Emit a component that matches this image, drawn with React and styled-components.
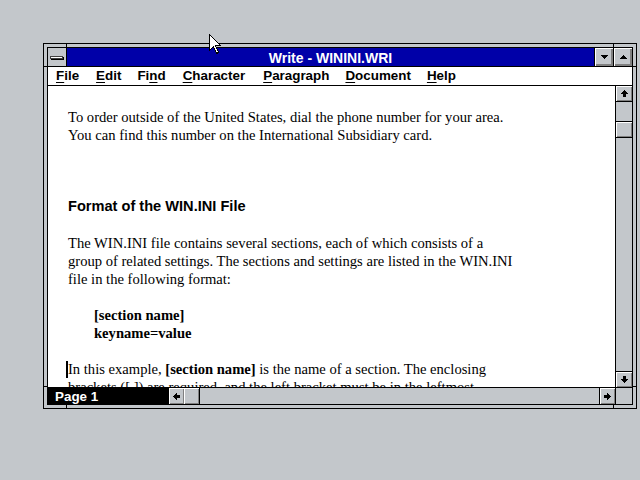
import React from "react";
import styled, { createGlobalStyle } from "styled-components";

const GlobalStyle = createGlobalStyle`
  html, body { margin: 0; padding: 0; background: #c3c7cb; }
  body { width: 640px; height: 480px; overflow: hidden; }
`;

const Desktop = styled.div`
  position: relative;
  width: 640px;
  height: 480px;
  padding: 43px 0 0 43px;
  box-sizing: border-box;
  background: #c3c7cb;
`;

const Window = styled.div`
  position: relative;
  width: 594px;
  height: 366px;
  box-sizing: border-box;
  border: 1px solid #000;
  padding: 3px;
  background: #c3c7cb;
`;

const Notch = styled.span`
  position: absolute;
  background: #000;
  ${(p) =>
    p.$v
      ? `width: 1px; height: 3px; left: ${p.$x}px; ${p.$bottom ? "bottom: 0;" : "top: 0;"}`
      : `height: 1px; width: 3px; top: ${p.$y}px; ${p.$right ? "right: 0;" : "left: 0;"}`}
`;

const Inner = styled.div`
  height: 100%;
  box-sizing: border-box;
  border: 1px solid #000;
  display: flex;
  flex-direction: column;
  background: #fff;
`;

const TitleBar = styled.div`
  display: flex;
  height: 18px;
  border-bottom: 1px solid #000;
  flex: none;
`;

const SysBox = styled.div`
  width: 18px;
  border-right: 1px solid #000;
  background: #c3c7cb;
  display: flex;
  align-items: center;
  justify-content: center;
`;

const SysBar = styled.div`
  width: 11px;
  height: 1px;
  background: #fff;
  border: 1px solid #404040;
  box-shadow: 1px 1px 0 #000;
  margin-left: -1px;
`;

const Caption = styled.div`
  flex: 1;
  background: #0000a8;
  color: #fff;
  font-family: "Liberation Sans", Arial, sans-serif;
  font-weight: bold;
  font-size: 14px;
  display: flex;
  align-items: center;
  justify-content: center;
  padding-top: 1px;
`;

const CapButton = styled.div`
  width: 18px;
  border-left: 1px solid #000;
  background: #c3c7cb;
  box-shadow: inset 1px 1px 0 #fff, inset -1px -1px 0 #808080, inset -2px -2px 0 #808080;
  display: flex;
  align-items: center;
  justify-content: center;
`;

const MenuBar = styled.div`
  display: flex;
  height: 19px;
  box-sizing: border-box;
  padding-bottom: 1px;
  border-bottom: 1px solid #000;
  align-items: center;
  font-family: "Liberation Sans", Arial, sans-serif;
  font-weight: bold;
  font-size: 13.4px;
  color: #000;
  flex: none;
`;

const MenuItem = styled.span`
  padding: 0 ${(p) => p.$pad ?? 8}px;
  margin-left: ${(p) => p.$shift ?? 0}px;
  u { text-decoration: underline; text-underline-offset: 2px; }
`;

const Body = styled.div`
  flex: 1;
  display: flex;
  min-height: 0;
`;

const Doc = styled.div`
  flex: 1;
  overflow: hidden;
  background: #fff;
  padding: 22px 0 0 20px;
  font-family: "Liberation Serif", "Times New Roman", serif;
  font-size: 14.6px;
  line-height: 18px;
  color: #000;
  white-space: nowrap;
`;

const Para = styled.div`
  margin-bottom: ${(p) => (p.$gap ?? 1) * 18}px;
  padding-left: ${(p) => p.$indent ?? 0}px;
  font-weight: ${(p) => (p.$bold ? "bold" : "normal")};
`;

const Line = styled.div`
  height: 18px;
`;

const Heading = styled.div`
  font-family: "Liberation Sans", Arial, sans-serif;
  font-weight: bold;
  font-size: 14.6px;
  height: 18px;
  margin-top: -1px;
  margin-bottom: 19px;
`;

const Caret = styled.span`
  display: inline-block;
  width: 2px;
  height: 17px;
  background: #000;
  vertical-align: -4px;
  margin-left: -2px;
`;

const VScroll = styled.div`
  width: 16px;
  flex: none;
  border-left: 1px solid #000;
  background: #c3c7cb;
  display: flex;
  flex-direction: column;
`;

const ScrollButton = styled.div`
  width: 16px;
  height: 16px;
  flex: none;
  box-sizing: border-box;
  background: #c3c7cb;
  box-shadow: inset 1px 1px 0 #fff, inset -1px -1px 0 #808080;
  display: flex;
  align-items: center;
  justify-content: center;
  ${(p) => p.$edge === "bottom" && "border-bottom: 1px solid #000;"}
  ${(p) => p.$edge === "top" && "border-top: 1px solid #000;"}
  ${(p) => p.$edge === "left" && "border-left: 1px solid #000; height: 100%;"}
`;

const Track = styled.div`
  flex: 1;
  display: flex;
  flex-direction: ${(p) => (p.$horizontal ? "row" : "column")};
`;

const VThumb = styled.div`
  margin-top: 19px;
  height: 17px;
  box-sizing: border-box;
  border-top: 1px solid #000;
  border-bottom: 1px solid #000;
  background: #c3c7cb;
  box-shadow: inset 1px 1px 0 #fff, inset -1px -1px 0 #808080;
`;

const HThumb = styled.div`
  width: 16px;
  height: 100%;
  box-sizing: border-box;
  border-right: 1px solid #000;
  background: #c3c7cb;
  box-shadow: inset 1px 1px 0 #fff, inset -1px -1px 0 #808080;
`;

const BottomRow = styled.div`
  display: flex;
  height: 16px;
  flex: none;
  border-top: 1px solid #000;
  background: #c3c7cb;
`;

const PageBox = styled.div`
  width: 120px;
  background: #000;
  color: #fff;
  font-family: "Liberation Sans", Arial, sans-serif;
  font-weight: bold;
  font-size: 13.4px;
  display: flex;
  align-items: center;
  padding-left: 7px;
  box-sizing: border-box;
`;

const HScroll = styled.div`
  flex: 1;
  display: flex;
`;

const Corner = styled.div`
  width: 16px;
  border-left: 1px solid #000;
  background: #c3c7cb;
`;

const Pointer = styled.svg`
  position: absolute;
  left: 209px;
  top: 34px;
`;

const rot = { up: 0, right: 90, down: 180, left: 270 };

const ScrollArrow = ({ dir }) => (
  <svg width="7" height="7" viewBox="0 0 7 7" shapeRendering="crispEdges"
       style={{ transform: `rotate(${rot[dir]}deg)` }}>
    <path d="M3 0h1v1h1v1h1v1h1v1H5v3H2V4H0V3h1V2h1V1h1z" fill="#000" />
  </svg>
);

const Tri = ({ up }) => (
  <svg width="7" height="4" viewBox="0 0 7 4" shapeRendering="crispEdges"
       style={{ transform: up ? "rotate(180deg)" : "none" }}>
    <path d="M0 0h7v1H6v1H5v1H4v1H3V3H2V2H1V1H0z" fill="#000" />
  </svg>
);

export default function App() {
  return (
    <>
      <GlobalStyle />
      <Desktop>
        <Window>
          <Notch $v $x={22} />
          <Notch $v $x={569} />
          <Notch $v $bottom $x={22} />
          <Notch $v $bottom $x={569} />
          <Notch $y={22} />
          <Notch $y={22} $right />
          <Notch $y={342} />
          <Notch $y={342} $right />
          <Inner>
            <TitleBar>
              <SysBox><SysBar /></SysBox>
              <Caption>Write - WININI.WRI</Caption>
              <CapButton><Tri /></CapButton>
              <CapButton><Tri up /></CapButton>
            </TitleBar>
            <MenuBar>
              <MenuItem $pad={8}><u>F</u>ile</MenuItem>
              <MenuItem $shift={1}><u>E</u>dit</MenuItem>
              <MenuItem>Fi<u>n</u>d</MenuItem>
              <MenuItem $shift={1}><u>C</u>haracter</MenuItem>
              <MenuItem $shift={2}><u>P</u>aragraph</MenuItem>
              <MenuItem><u>D</u>ocument</MenuItem>
              <MenuItem><u>H</u>elp</MenuItem>
            </MenuBar>
            <Body>
              <Doc>
                <Para $gap={3}>
                  <Line>To order outside of the United States, dial the phone number for your area.</Line>
                  <Line>You can find this number on the International Subsidiary card.</Line>
                </Para>
                <Heading>Format of the WIN.INI File</Heading>
                <Para>
                  <Line>The WIN.INI file contains several sections, each of which consists of a</Line>
                  <Line>group of related settings. The sections and settings are listed in the WIN.INI</Line>
                  <Line>file in the following format:</Line>
                </Para>
                <Para $indent={26} $bold>
                  <Line>[section name]</Line>
                  <Line>keyname=value</Line>
                </Para>
                <Para>
                  <Line><Caret />In this example, <b>[section name]</b> is the name of a section. The enclosing</Line>
                  <Line>brackets ([ ]) are required, and the left bracket must be in the leftmost</Line>
                </Para>
              </Doc>
              <VScroll>
                <ScrollButton $edge="bottom"><ScrollArrow dir="up" /></ScrollButton>
                <Track>
                  <VThumb />
                </Track>
                <ScrollButton $edge="top"><ScrollArrow dir="down" /></ScrollButton>
              </VScroll>
            </Body>
            <BottomRow>
              <PageBox>Page 1</PageBox>
              <HScroll>
                <ScrollButton $edge="left"><ScrollArrow dir="left" /></ScrollButton>
                <Track $horizontal>
                  <HThumb />
                </Track>
                <ScrollButton $edge="left"><ScrollArrow dir="right" /></ScrollButton>
              </HScroll>
              <Corner />
            </BottomRow>
          </Inner>
        </Window>
        <Pointer width="13" height="21" viewBox="0 0 13 21" shapeRendering="crispEdges">
          <path d="M0.5 0.5 L0.5 16.5 L4.5 12.5 L7.5 19.5 L9.5 18.5 L6.5 11.5 L11.5 11.5 Z"
                fill="#fff" stroke="#000" strokeWidth="1" />
        </Pointer>
      </Desktop>
    </>
  );
}
